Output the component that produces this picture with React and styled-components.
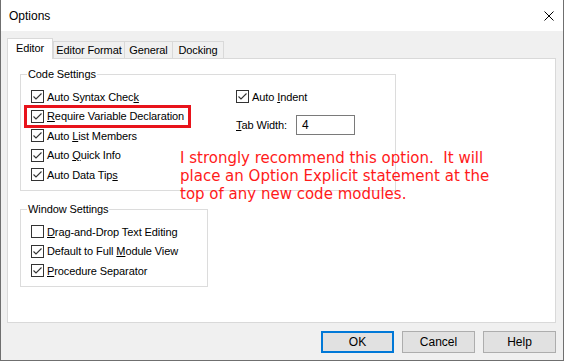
import React from "react";
import styled, { createGlobalStyle } from "styled-components";

const GlobalStyle = createGlobalStyle`
  html, body {
    margin: 0;
    padding: 0;
    background: #6b6b6b;
  }
`;

const Ventana = styled.div`
  width: 564px;
  height: 361px;
  box-sizing: border-box;
  border: 1px solid #6f6f6f;
  border-top: none;
  background: #f0f0f0;
  display: flex;
  flex-direction: column;
  font-family: "Liberation Sans", Arial, sans-serif;
  font-size: 11px;
  letter-spacing: -0.1px;
  color: #000;
`;

const BarraTitulo = styled.div`
  height: 31px;
  flex-shrink: 0;
  background: #fff;
  display: flex;
  align-items: center;
  justify-content: space-between;
  padding: 0 9px 0 8px;
`;

const Titulo = styled.span`
  font-size: 12px;
  letter-spacing: 0;
`;

const Cuerpo = styled.div`
  flex: 1;
  display: flex;
  flex-direction: column;
  padding: 7px 7px 7px 6px;
`;

const FilaTabs = styled.div`
  display: flex;
  align-items: flex-end;
  height: 20px;
`;

const Tab = styled.div`
  position: relative;
  z-index: ${(p) => (p.$active ? 2 : 1)};
  box-sizing: border-box;
  width: ${(p) => p.$w}px;
  height: ${(p) => (p.$active ? 21 : 17)}px;
  margin-bottom: ${(p) => (p.$active ? -1 : 0)}px;
  margin-left: ${(p) => (p.$join ? -1 : 0)}px;
  border: 1px solid #d9d9d9;
  border-bottom: none;
  background: ${(p) => (p.$active ? "#fff" : "#f0f0f0")};
  display: flex;
  align-items: center;
  justify-content: center;
  padding-bottom: ${(p) => (p.$active ? 2 : 0)}px;
`;

const Panel = styled.div`
  position: relative;
  height: 265px;
  box-sizing: border-box;
  border: 1px solid #d9d9d9;
  background: #fff;
  padding: 15px 0 0 12px;
  display: flex;
  flex-direction: column;
`;

const Grupo = styled.div`
  position: relative;
  box-sizing: border-box;
  width: ${(p) => p.$w}px;
  height: ${(p) => p.$h}px;
  margin-top: ${(p) => p.$mt || 0}px;
  border: 1px solid #dcdcdc;
  padding: 12px 0 0 10px;
  display: flex;
`;

const Leyenda = styled.span`
  position: absolute;
  top: -8px;
  left: 6px;
  height: 14px;
  line-height: 14px;
  padding: 0 1px;
  background: #fff;
`;

const Columna = styled.div`
  display: flex;
  flex-direction: column;
  width: ${(p) => (p.$w ? `${p.$w}px` : "auto")};
`;

const Fila = styled.div`
  position: relative;
  height: 19.5px;
  display: flex;
  align-items: center;

  ${(p) =>
    p.$highlight &&
    `
    &::before {
      content: "";
      position: absolute;
      left: -7px;
      top: -2px;
      bottom: -2px;
      width: 167px;
      box-sizing: border-box;
      border: 3px solid #e8131b;
    }
  `}
`;

const Caja = styled.span`
  width: 13px;
  height: 13px;
  box-sizing: border-box;
  border: 1px solid #333;
  background: #fff;
  margin-right: 3px;
  flex-shrink: 0;
  display: flex;
`;

const FilaTab = styled.div`
  display: flex;
  align-items: center;
  margin-top: 8px;
`;

const Etiqueta = styled.span`
  width: 60px;
`;

const Entrada = styled.div`
  width: 59px;
  height: 20px;
  box-sizing: border-box;
  border: 1px solid #7a7a7a;
  padding-left: 5px;
  display: flex;
  align-items: center;
  font-size: 12px;
`;

const Nota = styled.div`
  position: absolute;
  top: 90px;
  left: 172px;
  font-family: "DejaVu Sans", Verdana, sans-serif;
  font-size: 15px;
  line-height: 18px;
  letter-spacing: 0;
  color: #ff1a1a;
  white-space: pre;
`;

const FilaBotones = styled.div`
  display: flex;
  justify-content: flex-end;
  gap: 8px;
  margin-top: 8px;
`;

const Boton = styled.button`
  width: 73px;
  height: 22px;
  box-sizing: border-box;
  margin: 0;
  padding: 0;
  background: #e1e1e1;
  border: ${(p) => (p.$default ? "2px solid #0078d7" : "1px solid #adadad")};
  font-family: "Liberation Sans", Arial, sans-serif;
  font-size: 12px;
  color: #000;
`;

function Check({ checked, children, highlight }) {
  return (
    <Fila $highlight={highlight}>
      <Caja>
        {checked && (
          <svg width="11" height="11" viewBox="0 0 11 11">
            <path d="M1.5 5.5 L4 8 L9.5 2.5" fill="none" stroke="#333" strokeWidth="1.1" />
          </svg>
        )}
      </Caja>
      <span>{children}</span>
    </Fila>
  );
}

export default function App() {
  return (
    <>
      <GlobalStyle />
      <Ventana>
        <BarraTitulo>
          <Titulo>Options</Titulo>
          <svg width="10" height="10" viewBox="0 0 10 10">
            <path d="M0.5 0.5 L9.5 9.5 M9.5 0.5 L0.5 9.5" stroke="#000" strokeWidth="1" />
          </svg>
        </BarraTitulo>
        <Cuerpo>
          <FilaTabs>
            <Tab $active $w={46}>Editor</Tab>
            <Tab $w={72}>Editor Format</Tab>
            <Tab $w={49} $join>General</Tab>
            <Tab $w={52} $join>Docking</Tab>
          </FilaTabs>
          <Panel>
            <Grupo $w={376} $h={117}>
              <Leyenda>Code Settings</Leyenda>
              <Columna $w={205}>
                <Check checked>Auto Syntax Chec<u>k</u></Check>
                <Check checked highlight><u>R</u>equire Variable Declaration</Check>
                <Check checked>Auto <u>L</u>ist Members</Check>
                <Check checked>Auto <u>Q</u>uick Info</Check>
                <Check checked>Auto Data Tip<u>s</u></Check>
              </Columna>
              <Columna>
                <Check checked>Auto <u>I</u>ndent</Check>
                <FilaTab>
                  <Etiqueta><u>T</u>ab Width:</Etiqueta>
                  <Entrada>4</Entrada>
                </FilaTab>
              </Columna>
            </Grupo>
            <Grupo $w={188} $h={78} $mt={18}>
              <Leyenda>Window Settings</Leyenda>
              <Columna>
                <Check><u>D</u>rag-and-Drop Text Editing</Check>
                <Check checked>Default to Full <u>M</u>odule View</Check>
                <Check checked><u>P</u>rocedure Separator</Check>
              </Columna>
            </Grupo>
            <Nota>
              {"I strongly recommend this option.  It will\nplace an Option Explicit statement at the\ntop of any new code modules."}
            </Nota>
          </Panel>
          <FilaBotones>
            <Boton $default>OK</Boton>
            <Boton>Cancel</Boton>
            <Boton>Help</Boton>
          </FilaBotones>
        </Cuerpo>
      </Ventana>
    </>
  );
}
